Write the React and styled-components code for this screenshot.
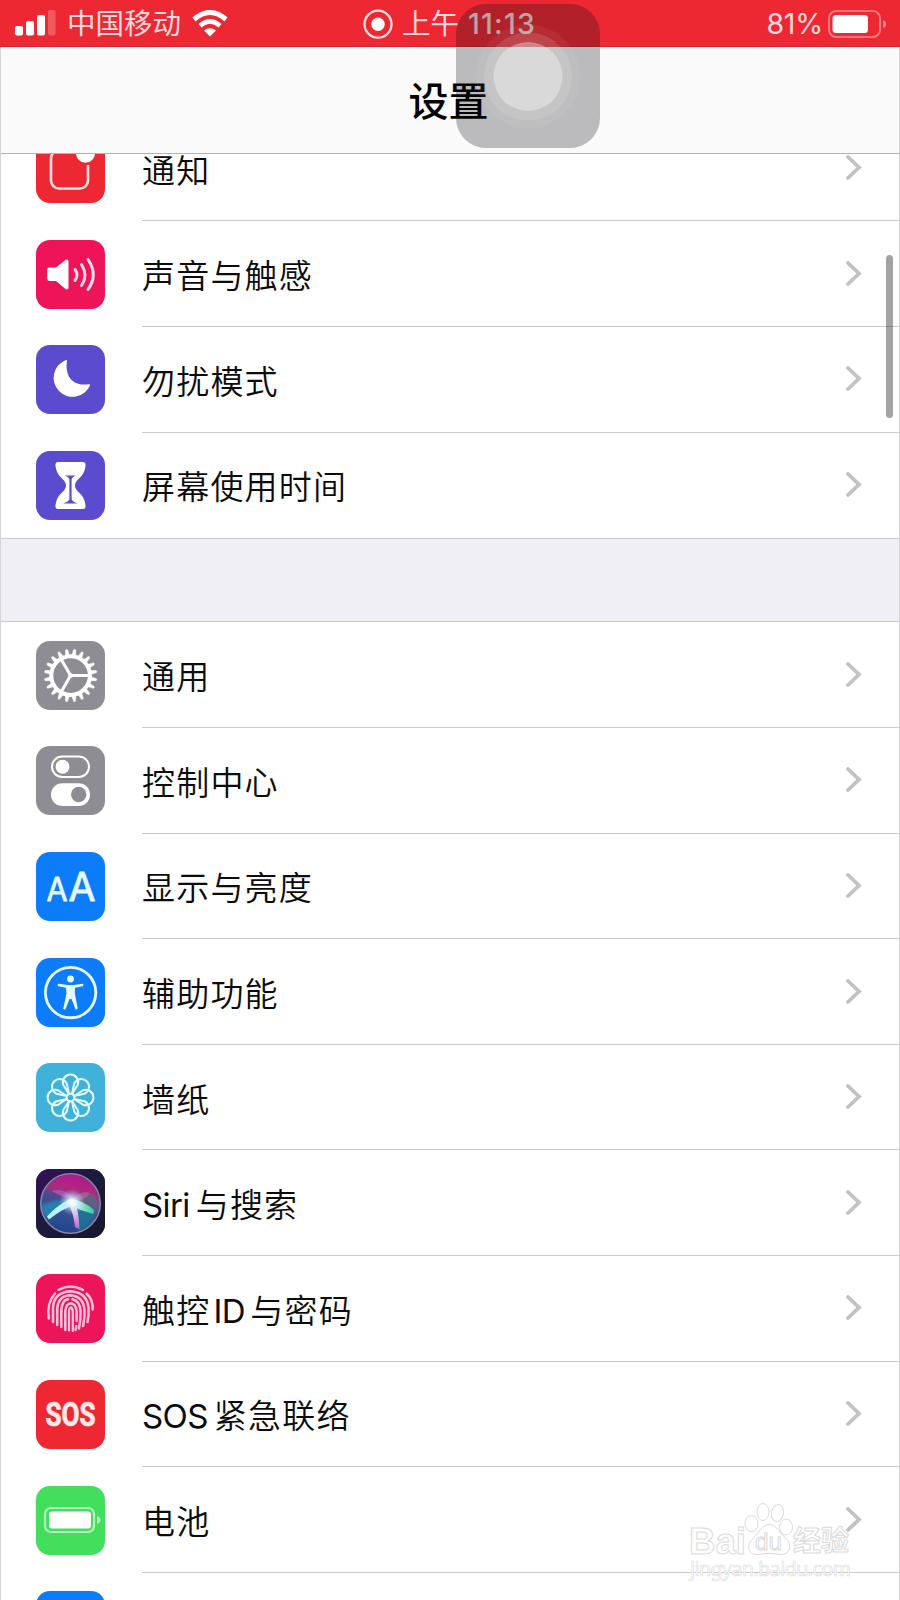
import React from "react";
import styled, {createGlobalStyle, css} from "styled-components";

const GlobalStyle = createGlobalStyle`
  * {
    box-sizing: border-box;
  }
  body {
    margin: 0;
    background: #fff;
    font-family: Inter, "Noto Sans CJK SC", sans-serif;
  }
`;

const Screen = styled.div`
  position: relative;
  display: flex;
  flex-direction: column;
  width: 900px;
  height: 1600px;
  overflow: hidden;
  background: #fff;
  color: #0b0b0b;
`;

const Edges = styled.div`
  position: absolute;
  inset: 47px 0 0 0;
  border: solid #d4d4d8;
  border-width: 0 1px;
  pointer-events: none;
`;

const StatusBar = styled.header`
  display: grid;
  grid-template-columns: 348px 1fr auto;
  align-items: center;
  height: 47px;
  flex: none;
  padding: 0 14px 0 15px;
  background: #ee2832;
  border-bottom: 1px solid #dc2430;
  color: #ffd9dc;
  font-size: 28.5px;
  line-height: 46px;
`;

const StatusGroup = styled.div`
  display: flex;
  align-items: center;
  gap: ${props => props.gap || 0}px;
  white-space: nowrap;
`;

const StatusText = styled.span`
  padding-top: ${props => props.drop || 1}px;
  font-weight: ${props => props.weight || 400};
  letter-spacing: ${props => props.spacing || 0}px;
`;

const NavBar = styled.div`
  display: flex;
  align-items: center;
  justify-content: center;
  height: 107px;
  flex: none;
  padding: 3px 3px 0 0;
  background: #fafafb;
  border-bottom: 1px solid #b2b2b4;
`;

const Title = styled.h1`
  margin: 0;
  color: #000;
  font-size: 40px;
  font-weight: 500;
  line-height: 60px;
`;

const Content = styled.main`
  flex: 1;
  min-height: 0;
  overflow: hidden;
  background: #efeff5;
`;

const Group = styled.section`
  background: #fff;
  ${props =>
    props.scrolled &&
    css`
      margin-top: -38.2px;
      margin-bottom: 84.3px;
      box-shadow: 0 0 0 1px #c9c9cd;
    `}
  ${props =>
    props.second &&
    css`
      box-shadow: 0 -1px 0 #c9c9cd;
    `}
`;

const Row = styled.div`
  display: flex;
  align-items: center;
  height: 105.6px;
  padding-left: 36px;
`;

const Tile = styled.div`
  width: 69px;
  height: 69px;
  flex: none;
  margin-right: 37px;
  border-radius: 14px;
  overflow: hidden;
  background: ${props => props.bg};
  svg {
    display: block;
  }
`;

const RowBody = styled.div`
  display: flex;
  flex: 1;
  align-items: center;
  justify-content: space-between;
  height: 100%;
  padding-right: 38px;
  border-bottom: 1px solid ${props => (props.last ? "transparent" : "#cacacc")};
`;

const Label = styled.span`
  padding-top: 5px;
  font-size: 33px;
  font-weight: 350;
  line-height: 48px;
  letter-spacing: 1.2px;
  white-space: nowrap;
`;

const Latin = styled.span`
  margin-right: ${props => props.after || 0}px;
  margin-left: ${props => props.before || 0}px;
  font-weight: 400;
  letter-spacing: ${props => props.spacing || 0}px;
`;

const AssistiveTouch = styled.div`
  position: absolute;
  top: 4px;
  left: 456px;
  width: 144px;
  height: 144px;
  border-radius: 30px;
  background: rgba(20, 15, 17, 0.27);
`;

const ScrollThumb = styled.div`
  position: absolute;
  top: 255px;
  right: 7px;
  width: 7px;
  height: 163px;
  border-radius: 4px;
  background: rgba(0, 0, 0, 0.36);
`;

const Watermark = styled.svg`
  position: absolute;
  left: 685px;
  top: 1500px;
`;

const Glyph = ({children}) => (
  <svg width="69" height="69" viewBox="0 0 69 69" fill="none">
    {children}
  </svg>
);

const NotificationIcon = () => (
  <Glyph>
    <rect x="15" y="16.5" width="37" height="38" rx="8" stroke="#ffe3e4" strokeWidth="2.6" />
    <circle cx="49.5" cy="19.3" r="12" fill="#ee2832" />
    <circle cx="49.5" cy="19.3" r="9.5" fill="#fff" />
  </Glyph>
);

const SoundIcon = () => (
  <Glyph>
    <path
      d="M13.5 27.5h6.5L29.5 20q3-1.500 3 1.500v26q0 3-3 1.500L20 41h-6.500q-2.300 0-2.300-2.300v-9q0-2.200 2.300-2.200z"
      fill="#fff"
    />
    <path
      d="M39 29.5q4 5.500 0 11M45.500 24.500q7 10.500 0 21M52 19.500q10.500 15 0 30"
      stroke="#ffdbe6"
      strokeWidth="3"
      strokeLinecap="round"
    />
  </Glyph>
);

const MoonIcon = () => (
  <Glyph>
    <path
      d="M31 16C29 28 34 42 53 39.2q1.500 0 1 1.300A19 19 0 1 1 29.500 15.200q1.700-.7 1.500.8z"
      fill="#fff"
    />
  </Glyph>
);

const HourglassIcon = () => (
  <Glyph>
    <path
      d="M22 11h25q3 0 2.500 4-1 8-6.500 12.500-4 3.500-4 7t4 7q5.500 4.500 6.500 12.500.5 4-2.500 4H22q-3 0-2.500-4 1-8 6.500-12.500 4-3.500 4-7t-4-7Q20.500 23 19.500 15q-.5-4 2.500-4z"
      fill="#fff"
    />
    <path
      d="M28.500 24.500h11.500q-4 1.500-4.400 4v19.500q.5 2.500 6 4.500H27q6-2 6.400-4.500V28.500q-.5-2.500-4.900-4z"
      fill="#5b4bcf"
    />
  </Glyph>
);

const teeth = Array.from({length: 20}, (_, i) => 9 + i * 18);

const GearIcon = () => (
  <Glyph>
    <g transform="translate(34.6 34.6)" stroke="#fff">
      <circle r="19.3" strokeWidth="4" />
      {teeth.map(angle => (
        <path
          key={angle}
          d="M20-2L26-1Q27 0 26 1L20 2z"
          fill="#fff"
          strokeWidth=".5"
          transform={`rotate(${angle})`}
        />
      ))}
      {[0, 120, 240].map(angle => (
        <path key={angle} d="M0 0H19" strokeWidth="3" transform={`rotate(${angle})`} />
      ))}
      <circle r="2.4" fill="#fff" strokeWidth="0" />
    </g>
  </Glyph>
);

const ControlIcon = () => (
  <Glyph>
    <rect x="16" y="10.5" width="37" height="20.5" rx="10.2" stroke="#fff" strokeWidth="2" />
    <circle cx="26.5" cy="20.8" r="7" fill="#fff" />
    <rect x="15" y="37.3" width="39" height="22.7" rx="11.3" fill="#fff" />
    <circle cx="42.7" cy="48.5" r="7.7" fill="#8e8d93" />
  </Glyph>
);

const DisplayIcon = () => (
  <Glyph>
    <g fill="none" stroke="#e4f8ff" strokeWidth=".8" strokeLinejoin="round" fontFamily="Inter">
      <text x="10.5" y="48.8" fill="#e4f8ff" fontSize="32" textLength="21" lengthAdjust="spacingAndGlyphs">
        A
      </text>
      <text x="32.5" y="48.8" fill="#e4f8ff" fontSize="39.5" textLength="27" lengthAdjust="spacingAndGlyphs">
        A
      </text>
    </g>
  </Glyph>
);

const AccessibilityIcon = () => (
  <Glyph>
    <circle cx="34.6" cy="34.6" r="25.2" stroke="#e4f8ff" strokeWidth="2.9" />
    <circle cx="34.5" cy="21" r="3.4" fill="#e4f8ff" />
    <path
      d="M22.500 25.700l9 1.200h6l9-1.200q2 1.200 0 2.500l-7.500 1.500q-.5 5 .5 9l2.200 11.500q-.5 2-2.200 1L35.500 41h-2l-4 10.200q-1.700 1-2.200-1l2.500-11.500q1-4 .2-9l-7.500-1.500q-2-1.300 0-2.500z"
      fill="#e4f8ff"
    />
  </Glyph>
);

const petals = Array.from({length: 8}, (_, i) => i * 45);

const FlowerIcon = () => (
  <Glyph>
    <g transform="translate(34.5 34.5)" stroke="#e2fbff" strokeWidth="2" strokeLinejoin="round">
      {petals.map(angle => (
        <path
          key={angle}
          d="M-1.500-3.600L-7.200-12.500A7.700 7.700 0 1 1 7.200-12.500L1.500-3.600"
          transform={`rotate(${angle})`}
        />
      ))}
      <circle r="3.8" />
    </g>
  </Glyph>
);

const SiriIcon = () => (
  <Glyph>
    <defs>
      <linearGradient id="siriBack" x1="0" y1="0" x2="1" y2="1">
        <stop offset="0" stopColor="#35105a" />
        <stop offset=".5" stopColor="#1b1b3c" />
        <stop offset="1" stopColor="#16182c" />
      </linearGradient>
      <linearGradient id="siriOrb" x1=".6" y1="0" x2=".4" y2="1">
        <stop offset="0" stopColor="#b3178f" />
        <stop offset=".25" stopColor="#b0287f" />
        <stop offset=".5" stopColor="#4a5590" />
        <stop offset="1" stopColor="#1b4590" />
      </linearGradient>
      <radialGradient id="siriGlow">
        <stop offset="0" stopColor="#fff" />
        <stop offset=".3" stopColor="#e8f7ff" stopOpacity=".8" />
        <stop offset="1" stopColor="#9fd7ff" stopOpacity="0" />
      </radialGradient>
      <linearGradient id="siriRight">
        <stop offset="0" stopColor="#fff" />
        <stop offset="1" stopColor="#2cc99a" />
      </linearGradient>
      <linearGradient id="siriDown" x1="0" y1="0" x2="0" y2="1">
        <stop offset="0" stopColor="#fff" />
        <stop offset="1" stopColor="#c060d0" />
      </linearGradient>
      <filter id="siriSoft">
        <feGaussianBlur stdDeviation="1.8" />
      </filter>
      <clipPath id="siriClip">
        <circle cx="34.5" cy="34.5" r="29" />
      </clipPath>
    </defs>
    <rect width="69" height="69" fill="url(#siriBack)" />
    <circle cx="34.5" cy="34.5" r="29" fill="url(#siriOrb)" />
    <g clipPath="url(#siriClip)">
      <g filter="url(#siriSoft)">
        <path d="M3 20Q16 22 34 33L11 51Q3 40 3 20z" fill="#3d4a90" opacity=".75" />
        <path d="M5 37Q18 30 34 33L11 50Q5 44 5 37z" fill="#10a5c8" opacity=".6" />
        <path d="M36 32Q50 20 58 26 66 34 60 42z" fill="#5f6780" opacity=".8" />
        <path d="M36 33L59 44Q54 60 42 62z" fill="#17789a" opacity=".8" />
      </g>
      <path d="M16 22Q29 18 39 31 27 29 16 22z" fill="#cd71c8" opacity=".45" />
      <path d="M36 32Q43 21 54 24 48 33 36 32z" fill="#d16ca8" opacity=".45" />
      <path d="M34 30Q20 37 11 47.500L13 50.500Q26 40 38 36z" fill="#b9f4ff" />
      <path d="M34 30Q47 31 58 41 59 43 57 45 45 42 34 36z" fill="url(#siriRight)" />
      <path d="M32 33Q38 46 39 58L43.500 60Q43 44 39 33z" fill="url(#siriDown)" />
      <circle cx="36" cy="33" r="13" fill="url(#siriGlow)" />
    </g>
    <circle cx="34.5" cy="34.5" r="29.7" stroke="#8f86ad" strokeWidth="1.6" />
  </Glyph>
);

const FingerprintIcon = () => (
  <Glyph>
    <g stroke="#ffc4dc" strokeWidth="2.5" strokeLinecap="round">
      <path d="M22.500 15.800Q34.500 9 47 16" />
      <path d="M12.800 44.500Q10.500 29 19 19.500M50.500 19.500Q57.500 26 56.500 35.500" />
      <path d="M17 48V34Q17.500 18.500 34 17.200 51.500 18 52.500 34.500q.5 7-1 13.500" />
      <path d="M21.200 51V35Q22 22 34 21.200 47.500 22 48.500 36q.5 8-1.500 16" />
      <path d="M25.300 53V36Q26 26 32 25.200M36.500 25.300Q44 27 44.500 37q.3 9-1.500 17.500" />
      <path d="M29.300 56V37Q30 29.500 35 29.200 40 30 40.600 37.500V47M40.300 52l-.7 4" />
      <path d="M33 56.500V37Q33.500 33.500 35 33.400 36.700 34 36.800 38V57" strokeWidth="2.2" />
    </g>
  </Glyph>
);

const SosIcon = () => (
  <Glyph>
    <text
      x="9.5"
      y="46.3"
      fill="#ffe9e8"
      stroke="#ffe9e8"
      strokeWidth=".7"
      fontFamily="Roboto"
      fontSize="32.5"
      fontWeight="700"
      textLength="50"
      lengthAdjust="spacingAndGlyphs"
    >
      SOS
    </text>
  </Glyph>
);

const BatteryIcon = () => (
  <Glyph>
    <rect x="9" y="22" width="49" height="24" rx="6" stroke="#b5f8bc" strokeWidth="2.2" />
    <rect x="13" y="25.5" width="42" height="17" rx="3" fill="#fff" />
    <path d="M61 30q3.500 1.500 3.500 4t-3.500 4z" fill="#b5f8bc" />
  </Glyph>
);

const Chevron = () => (
  <svg width="17" height="26" viewBox="0 0 17 26" fill="none">
    <path d="M3 2L14 12.500L3 23" stroke="#c2c2c4" strokeWidth="3.8" strokeLinecap="round" />
  </svg>
);

const SignalBars = () => (
  <svg width="41" height="27" viewBox="0 0 41 27">
    <g fill="#fff">
      <rect x="0" y="16" width="8" height="9.5" rx="2" />
      <rect x="11" y="11" width="8" height="14.5" rx="2" />
      <rect x="22" y="5" width="8" height="20.5" rx="2" />
      <rect x="33" y="0" width="7.5" height="25.5" rx="2" opacity=".22" />
    </g>
  </svg>
);

const Wifi = () => (
  <svg width="36" height="27" viewBox="0 0 36 27" fill="none">
    <path d="M2 9.500Q18-4.500 34 9.500" stroke="#fff" strokeWidth="5" />
    <path d="M8 15.700Q18 7.200 28 15.700" stroke="#fff" strokeWidth="4.5" />
    <path d="M12 20.500q6-4.500 12 0l-6 6z" fill="#fff" />
  </svg>
);

const RecordDot = () => (
  <svg width="30" height="30" viewBox="0 0 30 30" fill="none">
    <circle cx="15" cy="15.2" r="13.5" stroke="#ffe3e4" strokeWidth="2.3" />
    <circle cx="15" cy="15.2" r="6.7" fill="#fff" />
  </svg>
);

const StatusBattery = () => (
  <svg width="58" height="28" viewBox="0 0 58 28" fill="none">
    <rect x="1" y="1" width="51" height="26" rx="7" stroke="#f8888e" strokeWidth="1.7" />
    <rect x="4.5" y="5" width="35.5" height="18" rx="3.5" fill="#fff" />
    <path d="M55 10q3 1 3 4t-3 4z" fill="#f8888e" />
  </svg>
);

const primaryRows = [
  {label: "通知", bg: "#ee2832", icon: NotificationIcon},
  {label: "声音与触感", bg: "#ee1459", icon: SoundIcon},
  {label: "勿扰模式", bg: "#5b4bcf", icon: MoonIcon},
  {label: "屏幕使用时间", bg: "#5b4bcf", icon: HourglassIcon}
];

const systemRows = [
  {label: "通用", bg: "#8e8d93", icon: GearIcon},
  {label: "控制中心", bg: "#8e8d93", icon: ControlIcon},
  {label: "显示与亮度", bg: "#0c7cf9", icon: DisplayIcon},
  {label: "辅助功能", bg: "#0c7cf9", icon: AccessibilityIcon},
  {label: "墙纸", bg: "#40b1d8", icon: FlowerIcon},
  {
    label: (
      <>
        <Latin spacing={-0.6} after={6}>Siri</Latin>与搜索
      </>
    ),
    bg: "#1b1b3c",
    icon: SiriIcon
  },
  {
    label: (
      <>
        触控<Latin spacing={-0.4} before={3} after={5}>ID</Latin>与密码
      </>
    ),
    bg: "#ee1459",
    icon: FingerprintIcon
  },
  {
    label: (
      <>
        <Latin spacing={-0.6} after={6}>SOS</Latin>紧急联络
      </>
    ),
    bg: "#ee2832",
    icon: SosIcon
  },
  {label: "电池", bg: "#42df5d", icon: BatteryIcon},
  {label: "", bg: "#0c7cf9", icon: Glyph}
];

const SettingsRow = ({row, last}) => {
  const Icon = row.icon;
  return (
    <Row>
      <Tile bg={row.bg}>
        <Icon />
      </Tile>
      <RowBody last={last ? 1 : undefined}>
        <Label>{row.label}</Label>
        <Chevron />
      </RowBody>
    </Row>
  );
};

export default function App() {
  return (
    <Screen>
      <GlobalStyle />
      <StatusBar>
        <StatusGroup gap={11}>
          <SignalBars />
          <StatusText>中国移动</StatusText>
          <Wifi />
        </StatusGroup>
        <StatusGroup gap={9}>
          <RecordDot />
          <StatusText>上午</StatusText>
          <StatusText spacing={1.2} weight={500}>11:13</StatusText>
        </StatusGroup>
        <StatusGroup gap={5}>
          <StatusText spacing={-0.2}>81%</StatusText>
          <StatusBattery />
        </StatusGroup>
      </StatusBar>
      <NavBar>
        <Title>设置</Title>
      </NavBar>
      <Content>
        <Group scrolled>
          {primaryRows.map((row, index) => (
            <SettingsRow key={index} row={row} last={index === primaryRows.length - 1} />
          ))}
        </Group>
        <Group second>
          {systemRows.map((row, index) => (
            <SettingsRow key={index} row={row} />
          ))}
        </Group>
      </Content>
      <Edges />
      <AssistiveTouch>
        <svg width="144" height="144" viewBox="0 0 144 144" fill="#fff">
          <circle cx="72" cy="72.5" r="52" opacity=".05" />
          <circle cx="72" cy="72.5" r="44" opacity=".12" />
          <circle cx="72" cy="72.5" r="34.5" opacity=".34" />
        </svg>
      </AssistiveTouch>
      <ScrollThumb />
      <Watermark width="180" height="90" viewBox="0 0 180 90">
        <g fill="#fff" stroke="#dadada" strokeWidth="1">
          <text x="4" y="53.5" fontFamily="Liberation Sans" fontWeight="700" fontSize="37" textLength="57" lengthAdjust="spacingAndGlyphs">
            Bai
          </text>
          <ellipse cx="66.5" cy="23.5" rx="6.5" ry="8" />
          <ellipse cx="78" cy="12" rx="6" ry="8.5" />
          <ellipse cx="92.5" cy="13" rx="6" ry="8.5" transform="rotate(10 92.5 13)" />
          <ellipse cx="101" cy="27" rx="6.5" ry="8" />
          <path d="M84 24.500c8 0 11 9 16 13 9 8 4 18-5 17-8-1.500-14-1.500-22 0-9 1-13-9-5-16 6-5 8-14 16-14z" />
          <text x="70" y="50" fontFamily="Liberation Sans" fontSize="24" textLength="27" lengthAdjust="spacingAndGlyphs">
            du
          </text>
          <text x="108" y="51" fontFamily="Noto Sans CJK SC" fontWeight="700" fontSize="28">
            经验
          </text>
          <text x="5" y="76" stroke="#dedede" strokeWidth=".7" fontFamily="Noto Sans" fontSize="19.5" textLength="161">
            jingyan.baidu.com
          </text>
        </g>
      </Watermark>
    </Screen>
  );
}
